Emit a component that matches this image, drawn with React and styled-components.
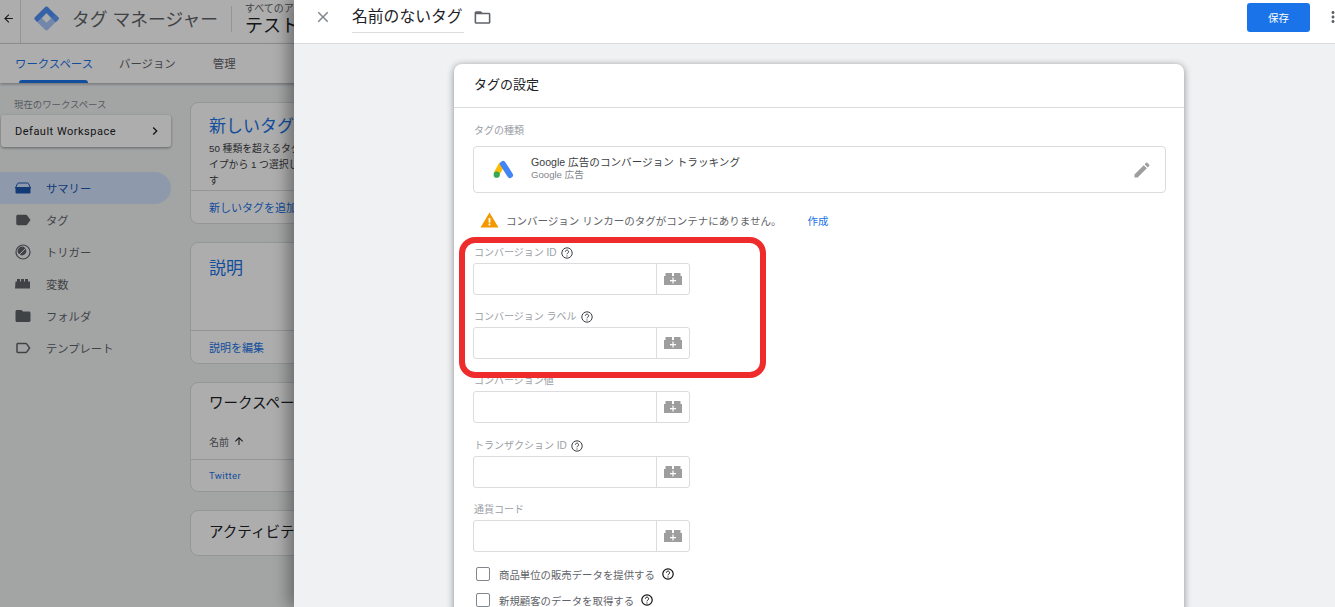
import React from "react";
import styled, { createGlobalStyle } from "styled-components";

const Global = createGlobalStyle`
  html, body { margin: 0; padding: 0; height: 100%; overflow: hidden; background: #f1f3f4; }
  body { font-family: "Liberation Sans", "Noto Sans CJK JP", sans-serif; }
  * { box-sizing: border-box; }
`;

const Page = styled.div`
  position: relative;
  width: 1335px;
  height: 607px;
  overflow: hidden;
  background: #f1f3f4;
`;

/* ---------- page behind the dialog ---------- */
const Header = styled.header`
  display: flex;
  align-items: center;
  height: 44px;
  background: #fff;
  border-bottom: 1px solid #dadce0;
`;
const BackCell = styled.div`
  display: flex;
  align-items: center;
  justify-content: center;
  width: 21px;
  height: 43px;
  padding: 0 4px 7px 0;
  border-right: 1px solid #dadce0;
  color: #202124;
`;
const LogoCell = styled.div`
  display: flex;
  margin: 0 13px 6px 13px;
`;
const Product = styled.div`
  font-size: 17.8px;
  color: #5f6368;
  white-space: nowrap;
  margin-bottom: 7px;
`;
const HeaderSep = styled.div`
  width: 1px;
  height: 26px;
  margin: 0 13px 6px 13px;
  background: #dadce0;
`;
const Crumb = styled.div`
  display: flex;
  flex-direction: column;
  white-space: nowrap;
  margin-top: -4px;
`;
const CrumbTop = styled.span`
  font-size: 10px;
  line-height: 12px;
  color: #5f6368;
`;
const CrumbMain = styled.span`
  font-size: 18px;
  line-height: 22px;
  color: #202124;
`;
const Tabs = styled.nav`
  display: flex;
  height: 39px;
  background: #fff;
  box-shadow: 0 1px 3px rgba(0, 0, 0, 0.35);
  position: relative;
`;
const Tab = styled.div`
  position: relative;
  display: flex;
  align-items: center;
  height: 37px;
  margin-left: ${(p) => p.$ml}px;
  font-size: 11.4px;
  color: ${(p) => (p.$active ? "#1a73e8" : "#5f6368")};
  white-space: nowrap;
  ${(p) =>
    p.$active &&
    `&::after { content: ""; position: absolute; left: 4px; right: 5px; bottom: -2px; height: 3px; border-radius: 3px 3px 0 0; background: #1a73e8; }`}
`;
const Body = styled.div`
  display: flex;
`;
const Sidebar = styled.aside`
  width: 190px;
  flex: none;
  padding-top: 16px;
`;
const SideLabel = styled.div`
  font-size: 9.4px;
  line-height: 12px;
  color: #80868b;
  padding-left: 14px;
`;
const WorkspaceCard = styled.div`
  display: flex;
  align-items: center;
  justify-content: space-between;
  width: 170px;
  height: 32px;
  margin: 4px 0 25px 1px;
  padding: 0 8px 0 14px;
  background: #fff;
  border-radius: 3px;
  box-shadow: 0 1px 3px rgba(0, 0, 0, 0.4);
  font: 11px "Roboto", sans-serif;
  letter-spacing: 0.5px;
  color: #202124;
`;
const NavList = styled.ul`
  list-style: none;
  margin: 0;
  padding: 0;
  width: 171px;
`;
const NavItem = styled.li`
  display: flex;
  align-items: center;
  gap: 15px;
  height: 32px;
  padding-left: 15px;
  border-radius: 0 16px 16px 0;
  font-size: 11.3px;
  color: ${(p) => (p.$active ? "#1a56b0" : "#5f6368")};
  background: ${(p) => (p.$active ? "#d2e3fc" : "transparent")};
`;
const NavIcon = styled.span`
  display: flex;
  flex: none;
  width: 16px;
  justify-content: center;
`;
const Cards = styled.main`
  display: flex;
  flex-direction: column;
  gap: 18px;
  width: 300px;
  padding-top: 19px;
`;
const Card = styled.section`
  height: ${(p) => p.$h}px;
  background: #fff;
  border: 1px solid #dadce0;
  border-radius: 8px;
  display: flex;
  flex-direction: column;
  overflow: hidden;
`;
const CardMain = styled.div`
  flex: 1;
  padding: ${(p) => p.$pt ?? 12}px 0 0 18px;
`;
const CardTitle = styled.div`
  font-size: ${(p) => p.$size || 17}px;
  line-height: 24px;
  color: ${(p) => (p.$blue ? "#1a73e8" : "#202124")};
  white-space: nowrap;
`;
const CardText = styled.div`
  width: 108px;
  margin-top: 2px;
  font-size: 9.8px;
  line-height: 16px;
  color: #3c4043;
`;
const CardFoot = styled.div`
  height: ${(p) => p.$h}px;
  display: flex;
  align-items: center;
  padding-left: 18px;
  border-top: 1px solid #dadce0;
  font-size: 11px;
  color: #1a73e8;
  white-space: nowrap;
`;
const ColHead = styled.div`
  display: flex;
  align-items: center;
  gap: 4px;
  height: 26px;
  margin-top: 13px;
  font-size: 10px;
  color: #5f6368;
`;
const LinkFoot = styled(CardFoot)`
  font: 9.5px "Roboto", sans-serif;
  letter-spacing: 0.4px;
`;
const Scrim = styled.div`
  position: absolute;
  inset: 0;
  background: rgba(0, 0, 0, 0.32);
`;

/* ---------- tag editor panel ---------- */
const Panel = styled.div`
  position: absolute;
  top: 0;
  right: 0;
  bottom: 0;
  left: 294px;
  background: #f0f1f3;
  box-shadow: -6px 0 14px rgba(0, 0, 0, 0.35);
  display: flex;
  flex-direction: column;
`;
const TopBar = styled.div`
  flex: none;
  display: flex;
  align-items: center;
  height: 44px;
  padding: 0 0 9px 20px;
  background: #fff;
  border-bottom: 1px solid #dadce0;
`;
const TagName = styled.div`
  width: 112px;
  margin-left: 20px;
  margin-top: 1px;
  height: 31px;
  line-height: 29px;
  font-size: 15.8px;
  color: #202124;
  border-bottom: 1px solid #dadce0;
  white-space: nowrap;
`;
const FolderBtn = styled.div`
  display: flex;
  margin-left: 9px;
  color: #5f6368;
`;
const Spacer = styled.div`
  flex: 1;
`;
const SaveBtn = styled.button`
  width: 63px;
  height: 29px;
  border: 0;
  border-radius: 3px;
  background: #1a73e8;
  color: #fff;
  font: 10.5px "Noto Sans CJK JP", sans-serif;
  padding: 0;
`;
const MoreBtn = styled.div`
  display: flex;
  flex: none;
  width: 25px;
  padding-left: 14px;
  color: #5f6368;
`;
const PanelBody = styled.div`
  flex: 1;
  min-height: 0;
  display: flex;
  padding: 20px 0 0 160px;
  overflow: hidden;
`;
const EditorCard = styled.div`
  width: 730px;
  height: 600px;
  flex: none;
  background: #fff;
  border-radius: 8px 8px 0 0;
  box-shadow: 0 1px 6px rgba(60, 64, 67, 0.4), 0 2px 8px rgba(60, 64, 67, 0.2);
`;
const EditorHead = styled.div`
  display: flex;
  align-items: center;
  height: 44px;
  padding: 0 0 5px 20px;
  font-size: 13px;
  color: #202124;
  border-bottom: 1px solid #dadce0;
`;
const EditorBody = styled.div`
  padding: 17px 18px 0 19px;
`;
const FieldLabel = styled.div`
  display: flex;
  align-items: center;
  gap: 4px;
  height: 12px;
  padding-left: 1px;
  font-size: 10px;
  line-height: 12px;
  color: #9aa0a6;
  white-space: nowrap;
`;
const TypeBox = styled.div`
  display: flex;
  align-items: center;
  height: 47px;
  margin-top: 9px;
  padding: 0 13px 0 19px;
  border: 1px solid #dadce0;
  border-radius: 4px;
`;
const TypeText = styled.div`
  flex: 1;
  margin-left: 17px;
  padding-bottom: 4px;
`;
const TypeTitle = styled.div`
  font-size: 10.6px;
  line-height: 14px;
  color: #3c4043;
`;
const TypeSub = styled.div`
  font-size: 9.6px;
  line-height: 12px;
  color: #80868b;
`;
const Warn = styled.div`
  display: flex;
  align-items: center;
  height: 20px;
  margin: 17px 0 17px 7px;
  font-size: 10.5px;
  color: #5f6368;
  white-space: nowrap;
`;
const WarnLink = styled.span`
  margin-left: 26px;
  color: #1a73e8;
`;
const WarnText = styled.span`
  margin-left: 7px;
`;
const Field = styled.div`
  margin-bottom: ${(p) => p.$mb ?? 16}px;
`;
const InputRow = styled.div`
  display: flex;
  width: 217px;
  height: 32px;
  margin-top: 4px;
  border: 1px solid #dadce0;
  border-radius: 3px;
`;
const TextInput = styled.div`
  flex: 1;
`;
const VarBtn = styled.div`
  display: flex;
  align-items: center;
  justify-content: center;
  width: 33px;
  border-left: 1px solid #dadce0;
`;
const CheckRow = styled.div`
  display: flex;
  align-items: center;
  height: 26px;
  margin-left: 3px;
  font-size: 10.4px;
  color: #5f6368;
  white-space: nowrap;
`;
const Box = styled.span`
  width: 14px;
  height: 14px;
  border: 1px solid #80868b;
  border-radius: 2px;
  margin-right: 9px;
  background: #fff;
`;
const HelpWrap = styled.span`
  display: flex;
  margin-left: 7px;
`;
const Highlight = styled.div`
  position: absolute;
  left: 459px;
  top: 237px;
  width: 307px;
  height: 141px;
  border: 6px solid #ee2c2c;
  border-radius: 16px;
  pointer-events: none;
`;

/* ---------- icons ---------- */
const MI = ({ d, size = 24, color = "currentColor" }) => (
  <svg width={size} height={size} viewBox="0 0 24 24" fill={color} style={{ flex: "none" }}><path d={d} /></svg>
);
const P = {
  back: "M20 11H7.83l5.59-5.59L12 4l-8 8 8 8 1.41-1.41L7.83 13H20v-2z",
  chevron: "M10 6L8.59 7.41 13.17 12l-4.58 4.59L10 18l6-6z",
  up: "M4 12l1.41 1.41L11 7.83V20h2V7.83l5.58 5.59L20 12l-8-8-8 8z",
  close: "M19 6.41L17.59 5 12 10.59 6.41 5 5 6.41 10.59 12 5 17.59 6.41 19 12 13.41 17.59 19 19 17.59 13.41 12z",
  folderLine: "M20 6h-8l-2-2H4c-1.1 0-1.99.9-1.99 2L2 18c0 1.1.9 2 2 2h16c1.1 0 2-.9 2-2V8c0-1.1-.9-2-2-2zm0 12H4V8h16v10z",
  folder: "M10 4H4c-1.1 0-1.99.9-1.99 2L2 18c0 1.1.9 2 2 2h16c1.1 0 2-.9 2-2V8c0-1.1-.9-2-2-2h-8l-2-2z",
  edit: "M3 17.25V21h3.75L17.81 9.94l-3.75-3.75L3 17.25zM20.71 7.04c.39-.39.39-1.02 0-1.41l-2.34-2.34c-.39-.39-1.02-.39-1.41 0l-1.83 1.83 3.75 3.75 1.83-1.83z",
  more: "M12 8c1.1 0 2-.9 2-2s-.9-2-2-2-2 .9-2 2 .9 2 2 2zm0 2c-1.1 0-2 .9-2 2s.9 2 2 2 2-.9 2-2-.9-2-2-2zm0 6c-1.1 0-2 .9-2 2s.9 2 2 2 2-.9 2-2-.9-2-2-2z",
  tag: "M17.63 5.84C17.27 5.33 16.67 5 16 5L5 5.01C3.9 5.01 3 5.9 3 7v10c0 1.1.9 1.99 2 1.99L16 19c.67 0 1.27-.33 1.63-.84L22 12l-4.37-6.16z",
  tagLine: "M17.63 5.84C17.27 5.33 16.67 5 16 5L5 5.01C3.9 5.01 3 5.9 3 7v10c0 1.1.9 1.99 2 1.99L16 19c.67 0 1.27-.33 1.63-.84L22 12l-4.37-6.16zM16 17H5V7h11l3.55 5L16 17z",
};

const GtmLogo = () => (
  <svg width="25" height="25" viewBox="0 0 25 25">
    <g transform="rotate(45 12.5 12.5)">
      <rect x="3.5" y="3.5" width="18" height="18" rx="2" fill="#a8c7fa" />
      <path d="M5.5 3.5h16v5h-13v13h-3a2 2 0 0 1-2-2v-14a2 2 0 0 1 2-2z" fill="#4f8ff5" />
      <path d="M15.5 8.5h6v-3a2 2 0 0 0-2-2h-4z" fill="#5f9cf8" />
      <rect x="9" y="9" width="6.5" height="6.5" fill="#fff" />
    </g>
  </svg>
);
const AdsLogo = () => (
  <svg width="21" height="19" viewBox="0 0 21 19">
    <line x1="9" y1="4" x2="3.5" y2="14" stroke="#fbbc04" strokeWidth="6" strokeLinecap="butt" />
    <line x1="10" y1="4" x2="17" y2="15" stroke="#4285f4" strokeWidth="6" strokeLinecap="round" />
    <circle cx="3.7" cy="14.7" r="3.1" fill="#34a853" />
  </svg>
);
const WarnIcon = () => (
  <svg width="19" height="16" viewBox="0 0 19 16">
    <path d="M9.5 0.5L18.5 15.5H0.5z" fill="#f29900" />
    <rect x="8.6" y="6" width="1.8" height="4.6" fill="#fff" />
    <rect x="8.6" y="11.6" width="1.8" height="1.8" fill="#fff" />
  </svg>
);
const Help = ({ dark }) => (
  <svg width="12" height="12" viewBox="0 0 12 12" fill="none" stroke={dark ? "#111" : "#3c4043"}>
    <circle cx="6" cy="6" r="5.2" strokeWidth={dark ? 1.2 : 1} />
    <path d="M4.4 4.7a1.6 1.6 0 1 1 2.5 1.3c-.6.4-.9.7-.9 1.3" strokeWidth="1" />
    <circle cx="6" cy="9" r=".35" strokeWidth=".6" />
  </svg>
);
const Brick = () => (
  <svg width="18" height="12" viewBox="0 0 18 12">
    <path d="M0 3h1.5V0H8v3h2V0h6.5v3H18v9H0z" fill="#9e9e9e" />
    <path d="M8.4 4.5h1.2v2.5H12v1.2H9.6v2.3H8.4V8.2H6V7h2.4z" fill="#fff" />
  </svg>
);
const SummaryIcon = () => (
  <svg width="16" height="16" viewBox="0 0 16 16">
    <path d="M0.5 8L2.5 3.5c.2-.4.5-.5 1-.5h9c.5 0 .8.1 1 .5l2 4.5z" fill="none" stroke="#1a56b0" strokeWidth="1" />
    <path d="M0.5 7h15v5.5a1 1 0 0 1-1 1h-13a1 1 0 0 1-1-1z" fill="#1a56b0" />
  </svg>
);
const TriggerIcon = () => (
  <svg width="16" height="16" viewBox="0 0 16 16">
    <circle cx="8" cy="8" r="7" fill="none" stroke="#5f6368" strokeWidth="1.2" />
    <circle cx="7" cy="7" r="4.4" fill="#5f6368" />
    <path d="M10.5 4.5l-7 7" stroke="#fff" strokeWidth=".9" />
  </svg>
);
const VarIcon = () => (
  <svg width="16" height="16" viewBox="0 0 16 16">
    <path d="M0.5 5.5h1.5V3h3v2.5h1V3h3v2.5h1V3h3v2.5h2V12.5h-15z" fill="#5f6368" />
  </svg>
);
const NavSvg = ({ d }) => <MI d={d} size={18} color="#5f6368" />;

const nav = [
  ["サマリー", <SummaryIcon />, true],
  ["タグ", <NavSvg d={P.tag} />],
  ["トリガー", <TriggerIcon />],
  ["変数", <VarIcon />],
  ["フォルダ", <NavSvg d={P.folder} />],
  ["テンプレート", <NavSvg d={P.tagLine} />],
];

const fields = [
  { label: "コンバージョン ID", help: true },
  { label: "コンバージョン ラベル", help: true },
  { label: "コンバージョン値", mb: 17 },
  { label: "トランザクション ID", help: true },
  { label: "通貨コード", mb: 9 },
];

export default function App() {
  return (
    <Page>
      <Global />
      <Header>
        <BackCell><MI d={P.back} size={13} /></BackCell>
        <LogoCell><GtmLogo /></LogoCell>
        <Product>タグ マネージャー</Product>
        <HeaderSep />
        <Crumb>
          <CrumbTop>すべてのアカウント</CrumbTop>
          <CrumbMain>テスト</CrumbMain>
        </Crumb>
      </Header>
      <Tabs>
        <Tab $ml={15} $active>ワークスペース</Tab>
        <Tab $ml={26}>バージョン</Tab>
        <Tab $ml={37}>管理</Tab>
      </Tabs>
      <Body>
        <Sidebar>
          <SideLabel>現在のワークスペース</SideLabel>
          <WorkspaceCard>
            Default Workspace
            <MI d={P.chevron} size={16} color="#202124" />
          </WorkspaceCard>
          <NavList>
            {nav.map(([t, icon, active]) => (
              <NavItem key={t} $active={active}><NavIcon>{icon}</NavIcon><span>{t}</span></NavItem>
            ))}
          </NavList>
        </Sidebar>
        <Cards>
          <Card $h={122}>
            <CardMain>
              <CardTitle $blue>新しいタグ</CardTitle>
              <CardText>50 種類を超えるタグタイプから 1 つ選択します</CardText>
            </CardMain>
            <CardFoot $h={33}>新しいタグを追加</CardFoot>
          </Card>
          <Card $h={122}>
            <CardMain $pt={14}>
              <CardTitle $blue>説明</CardTitle>
            </CardMain>
            <CardFoot $h={33}>説明を編集</CardFoot>
          </Card>
          <Card $h={110}>
            <CardMain $pt={8}>
              <CardTitle $size={14.5}>ワークスペースの変更</CardTitle>
              <ColHead>名前 <MI d={P.up} size={12} color="#202124" /></ColHead>
            </CardMain>
            <LinkFoot $h={32}>Twitter</LinkFoot>
          </Card>
          <Card $h={46}>
            <CardMain $pt={9}>
              <CardTitle $size={14.5}>アクティビティ履歴</CardTitle>
            </CardMain>
          </Card>
        </Cards>
      </Body>
      <Scrim />
      <Panel>
        <TopBar>
          <MI d={P.close} size={18} color="#80868b" />
          <TagName>名前のないタグ</TagName>
          <FolderBtn><MI d={P.folderLine} size={19} /></FolderBtn>
          <Spacer />
          <SaveBtn>保存</SaveBtn>
          <MoreBtn><MI d={P.more} size={18} /></MoreBtn>
        </TopBar>
        <PanelBody>
          <EditorCard>
            <EditorHead>タグの設定</EditorHead>
            <EditorBody>
              <FieldLabel>タグの種類</FieldLabel>
              <TypeBox>
                <AdsLogo />
                <TypeText>
                  <TypeTitle>Google 広告のコンバージョン トラッキング</TypeTitle>
                  <TypeSub>Google 広告</TypeSub>
                </TypeText>
                <MI d={P.edit} size={20} color="#9e9e9e" />
              </TypeBox>
              <Warn>
                <WarnIcon />
                <WarnText>コンバージョン リンカーのタグがコンテナにありません。</WarnText>
                <WarnLink>作成</WarnLink>
              </Warn>
              {fields.map((f) => (
                <Field key={f.label} $mb={f.mb}>
                  <FieldLabel>{f.label}{f.help && <Help />}</FieldLabel>
                  <InputRow>
                    <TextInput />
                    <VarBtn><Brick /></VarBtn>
                  </InputRow>
                </Field>
              ))}
              <CheckRow>
                <Box />商品単位の販売データを提供する<HelpWrap><Help dark /></HelpWrap>
              </CheckRow>
              <CheckRow>
                <Box />新規顧客のデータを取得する<HelpWrap><Help dark /></HelpWrap>
              </CheckRow>
            </EditorBody>
          </EditorCard>
        </PanelBody>
      </Panel>
      <Highlight />
    </Page>
  );
}
